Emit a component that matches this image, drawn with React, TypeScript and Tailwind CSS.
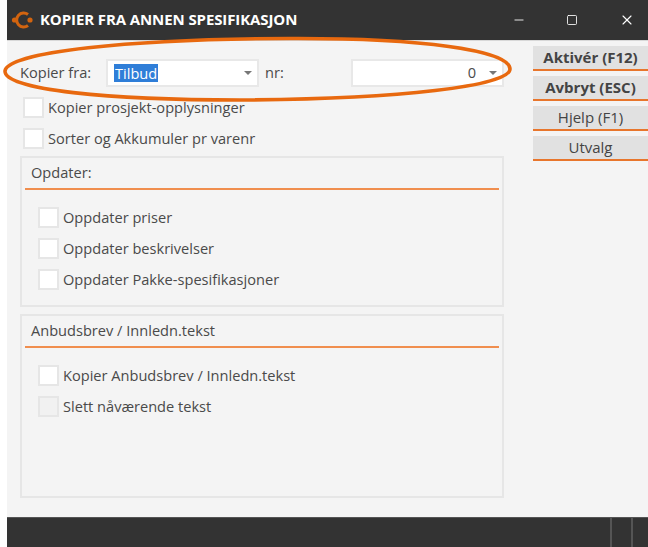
import React from "react";
import { Minus, Square, X } from "lucide-react";

function Check({ label, disabled }: { label: string; disabled?: boolean }) {
  return (
    <div className="flex h-[31px] items-center">
      <span className={`box-border block h-[21px] w-[21px] shrink-0 border-2 border-[#e6e6e6] ${disabled ? "bg-[#f1f1f1]" : "bg-white"}`} />
      <span className="ml-[4px] pb-[1px] text-[14.6px] leading-[20px] text-[#4a4a4a]">{label}</span>
    </div>
  );
}

function Field({ children, width }: { children: React.ReactNode; width: string }) {
  return (
    <div className={`box-border flex h-[28px] items-center border-2 border-[#e8e8e8] bg-white ${width}`}>
      {children}
    </div>
  );
}

function Caret() {
  return <span className="h-0 w-0 border-x-[4px] border-t-[4px] border-x-transparent border-t-[#777]" />;
}

function Btn({ label, bold }: { label: string; bold?: boolean }) {
  return (
    <div className={`box-border flex h-[25px] items-center justify-center border-b-2 border-[#e8762c] bg-[#e1e1e1] text-[15px] leading-none text-[#444] ${bold ? "font-bold" : ""}`}>
      {label}
    </div>
  );
}

function Group({ title, height, items }: { title: string; height: string; items: { label: string; disabled?: boolean }[] }) {
  return (
    <div className={`box-border border-2 border-[#e6e6e6] px-[3px] ${height}`}>
      <div className="flex h-[30px] items-center pl-[6px] text-[14.6px] text-[#4a4a4a]">{title}</div>
      <div className="h-[2px] bg-[#f08e4e]" />
      <div className="pl-[13px] pt-[12px]">
        {items.map((i) => (
          <Check key={i.label} {...i} />
        ))}
      </div>
    </div>
  );
}

export default function App() {
  return (
    <div className="relative h-[547px] w-[648px] overflow-hidden bg-white pl-[7px] font-['Open_Sans','Noto_Sans',sans-serif]">
      <div className="flex h-[40px] items-center bg-[#333333] pb-[1px]">
        <svg width="24" height="20" viewBox="0 0 24 20" className="ml-[4px] shrink-0">
          <path d="M17 4.5 A7 7 0 1 0 17 15.5" fill="none" stroke="#d2640f" strokeWidth="3" />
          <circle cx="3.5" cy="10" r="2.6" fill="#d2640f" />
          <circle cx="19" cy="10" r="2.6" fill="#d2640f" />
        </svg>
        <span className="ml-[5px] text-[15px] font-bold tracking-[-0.1px] text-white">KOPIER FRA ANNEN SPESIFIKASJON</span>
        <div className="ml-auto flex items-center text-white">
          <Minus size={14} strokeWidth={1.5} className="mr-[40px]" />
          <Square size={12} strokeWidth={1.7} className="mr-[41px]" />
          <X size={16} strokeWidth={1.7} className="mr-[13px]" />
        </div>
      </div>
      <div className="flex h-[477px] border-t border-[#d8d8d8] bg-[#f4f4f4]">
        <div className="w-[497px] pl-[13px] pt-[18px]">
          <div className="flex items-center">
            <span className="w-[86px] text-[14.6px] text-[#4a4a4a]">Kopier fra:</span>
            <Field width="w-[153px]">
              <span className="ml-[6px] bg-[#2f7ed8] px-[1px] text-[14.6px] leading-[18px] text-white">Tilbud</span>
              <span className="ml-auto mr-[5px] flex"><Caret /></span>
            </Field>
            <span className="ml-[6px] w-[86px] text-[14.6px] text-[#4a4a4a]">nr:</span>
            <Field width="w-[153px]">
              <span className="ml-auto text-[14.6px] text-[#4a4a4a]">0</span>
              <span className="ml-[13px] mr-[5px] flex"><Caret /></span>
            </Field>
          </div>
          <div className="pl-[3px] pt-[5px]">
            <Check label="Kopier prosjekt-opplysninger" />
            <Check label="Sorter og Akkumuler pr varenr" />
          </div>
          <div className="mt-[2px] flex flex-col gap-[7px]">
            <Group
              title="Opdater:"
              height="h-[151px]"
              items={[{ label: "Oppdater priser" }, { label: "Oppdater beskrivelser" }, { label: "Oppdater Pakke-spesifikasjoner" }]}
            />
            <Group
              title="Anbudsbrev / Innledn.tekst"
              height="h-[184px]"
              items={[{ label: "Kopier Anbudsbrev / Innledn.tekst" }, { label: "Slett nåværende tekst", disabled: true }]}
            />
          </div>
        </div>
        <div className="ml-[29px] flex w-[115px] flex-col gap-[5px] pt-[5px]">
          <Btn label="Aktivér (F12)" bold />
          <Btn label="Avbryt (ESC)" bold />
          <Btn label="Hjelp (F1)" />
          <Btn label="Utvalg" />
        </div>
      </div>
      <div className="flex h-[30px] justify-end border-t border-[#555] bg-[#333333]">
        <span className="mr-[19px] h-full w-[2px] bg-[#555]" />
        <span className="mr-[15px] h-full w-[2px] bg-[#555]" />
      </div>
      <svg className="absolute left-0 top-0" width="648" height="547">
        <path
          d="M5 71 C7 52 130 39 290 38.5 C420 38 510 50 510 69 C510 86 400 99 240 100 C110 100 4 90 5 71 Z"
          fill="none"
          stroke="#e8690f"
          strokeWidth="3.6"
        />
      </svg>
    </div>
  );
}
